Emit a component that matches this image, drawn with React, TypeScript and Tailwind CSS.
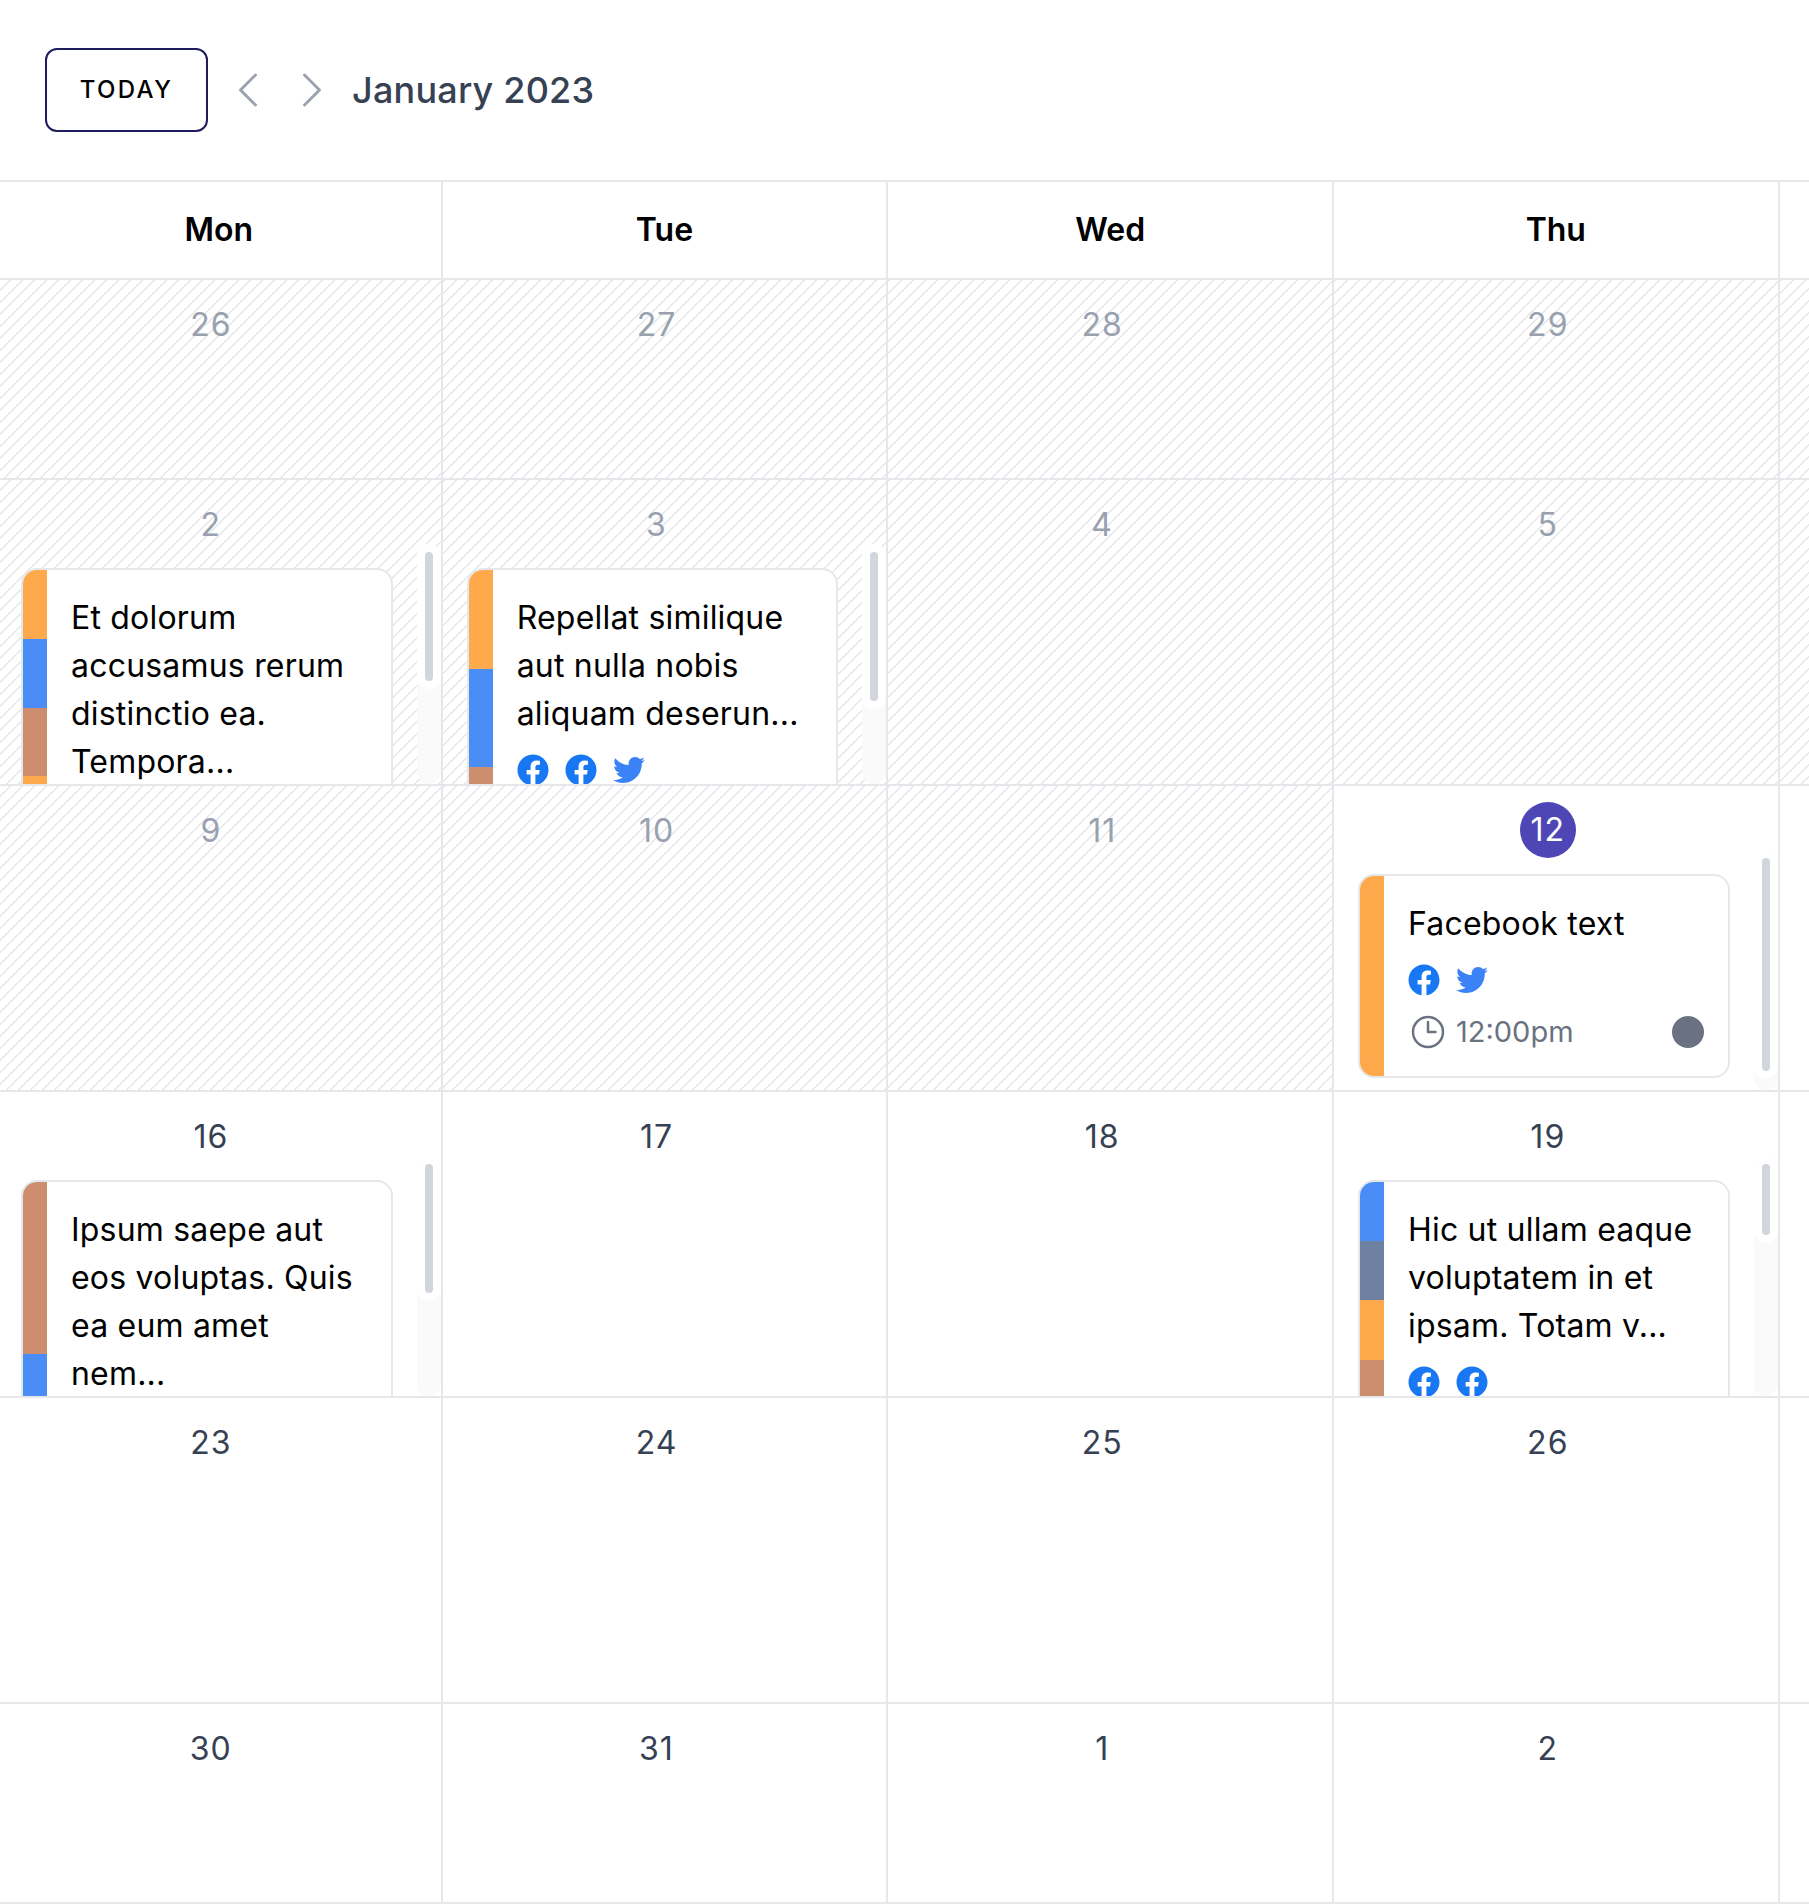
import { FaFacebook, FaTwitter } from 'react-icons/fa'

const HATCH = 'bg-[repeating-linear-gradient(135deg,#e5e7eb_0,#e5e7eb_1.5px,#ffffff_1.5px,#ffffff_8.49px)]'

type Post = {
  text: string
  stripes: string[]
  icons: string[]
  thumb: string
}

type Day = {
  n: number
  off?: boolean
  today?: boolean
  post?: Post
}

const weeks: Day[][] = [
  [{ n: 26, off: true }, { n: 27, off: true }, { n: 28, off: true }, { n: 29, off: true }],
  [
    {
      n: 2,
      off: true,
      post: {
        text: 'Et dolorum accusamus rerum distinctio ea. Tempora...',
        stripes: ['bg-[#ffa94d]', 'bg-[#4a8df6]', 'bg-[#cc8e6f]', 'bg-[#ffa94d]', 'bg-[#4a8df6]'],
        icons: ['fb', 'tw'],
        thumb: 'h-[145px]',
      },
    },
    {
      n: 3,
      off: true,
      post: {
        text: 'Repellat similique aut nulla nobis aliquam deserun...',
        stripes: ['bg-[#ffa94d]', 'bg-[#4a8df6]', 'bg-[#cc8e6f]'],
        icons: ['fb', 'fb', 'tw'],
        thumb: 'h-[165px]',
      },
    },
    { n: 4, off: true },
    { n: 5, off: true },
  ],
  [
    { n: 9, off: true },
    { n: 10, off: true },
    { n: 11, off: true },
    {
      n: 12,
      today: true,
      post: { text: 'Facebook text', stripes: ['bg-[#ffa94d]'], icons: ['fb', 'tw'], thumb: 'h-[229px]' },
    },
  ],
  [
    {
      n: 16,
      post: {
        text: 'Ipsum saepe aut eos voluptas. Quis ea eum amet nem...',
        stripes: ['bg-[#cc8e6f]', 'bg-[#4a8df6]'],
        icons: ['fb'],
        thumb: 'h-[145px]',
      },
    },
    { n: 17 },
    { n: 18 },
    {
      n: 19,
      post: {
        text: 'Hic ut ullam eaque voluptatem in et ipsam. Totam v...',
        stripes: ['bg-[#4a8df6]', 'bg-[#6e81a0]', 'bg-[#ffa94d]', 'bg-[#cc8e6f]', 'bg-[#4a8df6]'],
        icons: ['fb', 'fb'],
        thumb: 'h-[87px]',
      },
    },
  ],
  [{ n: 23 }, { n: 24 }, { n: 25 }, { n: 26 }],
  [{ n: 30 }, { n: 31 }, { n: 1 }, { n: 2 }],
]

function PostCard({ post }: { post: Post }) {
  return (
    <div className="flex shrink-0 overflow-hidden rounded-2xl border-2 border-gray-200 bg-white">
      <div className="flex w-6 shrink-0 flex-col">
        {post.stripes.map((s, i) => (
          <div key={i} className={`flex-1 ${s}`} />
        ))}
      </div>
      <div className="min-w-0 flex-1 px-6 pt-6 pb-6">
        <p className="text-[32px] leading-[48px] tracking-[0.2px] text-black">{post.text}</p>
        <div className="mt-4 flex gap-4">
          {post.icons.map((ic, i) =>
            ic === 'fb' ? (
              <FaFacebook key={i} className="size-8 text-[#1877f2]" />
            ) : (
              <FaTwitter key={i} className="size-8 text-[#3b82f6]" />
            ),
          )}
        </div>
        <div className="mt-4 flex h-10 items-center justify-between">
          <div className="flex items-center gap-2">
            <svg viewBox="0 0 24 24" fill="none" stroke="#6b7280" strokeWidth={1.5} className="size-10">
              <path strokeLinecap="round" strokeLinejoin="round" d="M12 6v6h4.5m4.5 0a9 9 0 11-18 0 9 9 0 0118 0z" />
            </svg>
            <span className="text-[29px] text-gray-500">12:00pm</span>
          </div>
          <span className="size-8 rounded-full bg-gray-500" />
        </div>
      </div>
    </div>
  )
}

function DayCell({ day, height }: { day: Day; height: string }) {
  return (
    <div className={`flex flex-col overflow-hidden border-r-2 border-b-2 border-gray-200 ${height} ${day.off ? HATCH : 'bg-white'}`}>
      <div className={`flex h-16 shrink-0 justify-center pr-4 ${day.today ? 'pt-4' : 'pt-[27px]'}`}>
        {day.today ? (
          <span className="flex size-14 shrink-0 items-center justify-center rounded-full bg-[#4f46b5] text-[32px] tracking-[1px] text-white">
            {day.n}
          </span>
        ) : (
          <span className={`h-9 text-[32px] leading-9 tracking-[1px] ${day.off ? 'text-gray-400' : 'text-gray-700'}`}>{day.n}</span>
        )}
      </div>
      {day.post && (
        <div className="flex min-h-0 flex-1">
          <div className="flex min-w-0 flex-1 flex-col overflow-hidden pt-6 pl-6 pr-6">
            <PostCard post={day.post} />
          </div>
          <div className="w-6 shrink-0 overflow-hidden rounded-2xl bg-[#fafafa]">
            <div className={`${day.post.thumb} rounded-full border-8 border-white bg-gray-300`} />
          </div>
        </div>
      )}
    </div>
  )
}

export default function App() {
  return (
    <div className="h-[1904px] w-full overflow-hidden bg-white font-['Inter',sans-serif]">
      <div className="flex h-[182px] items-center border-b-2 border-gray-200 pl-[45px]">
        <button className="h-[84px] w-[163px] rounded-xl border-2 border-[#1e1b5e] text-[24px] font-medium tracking-[0.1em] text-black">
          TODAY
        </button>
        <svg viewBox="0 0 24 24" fill="none" stroke="#9ca3af" strokeWidth={1.5} className="ml-4 size-12">
          <path strokeLinecap="round" strokeLinejoin="round" d="M15.75 19.5L8.25 12l7.5-7.5" />
        </svg>
        <svg viewBox="0 0 24 24" fill="none" stroke="#9ca3af" strokeWidth={1.5} className="ml-4 size-12">
          <path strokeLinecap="round" strokeLinejoin="round" d="M8.25 4.5l7.5 7.5-7.5 7.5" />
        </svg>
        <h1 className="ml-4 text-[36px] font-medium tracking-[0.2px] text-gray-700">January 2023</h1>
      </div>
      <div className="-ml-[3px] grid grid-cols-[repeat(4,445.67px)_100px]">
        {['Mon', 'Tue', 'Wed', 'Thu', ''].map((d, i) => (
          <div
            key={i}
            className="flex h-[98px] items-center justify-center border-r-2 border-b-2 border-gray-200 text-[32px] font-semibold text-black"
          >
            {d}
          </div>
        ))}
        {weeks.map((week, w) => {
          const height = w === 0 || w === 5 ? 'h-[200px]' : 'h-[306px]'
          return [
            ...week.map((day, i) => <DayCell key={`${w}-${i}`} day={day} height={height} />),
            <div
              key={`${w}-end`}
              className={`border-b-2 border-gray-200 ${height} ${w < 2 ? HATCH : 'bg-white'}`}
            />,
          ]
        })}
      </div>
    </div>
  )
}
